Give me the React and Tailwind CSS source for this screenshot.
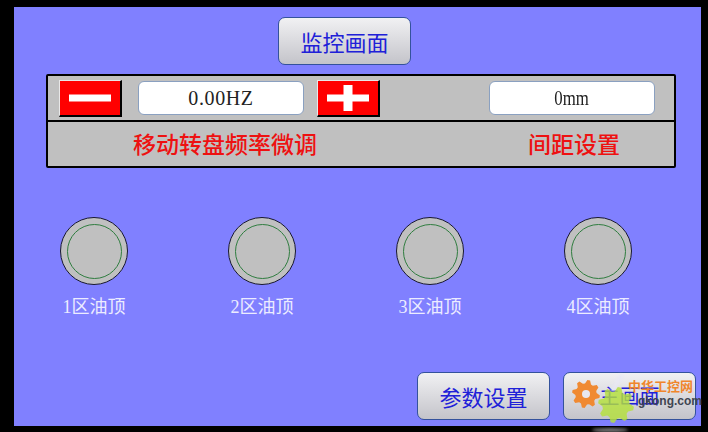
import React from "react";

const serif = "font-['Liberation_Serif','Noto_Sans_CJK_SC',serif]";

function Gear({ cx, cy, r, teeth, fill, hole, opacity = 1 }) {
  const pts = [];
  for (let i = 0; i < teeth * 4; i++) {
    const a = (i / (teeth * 4)) * Math.PI * 2;
    const rad = i % 4 < 2 ? r : r * 0.76;
    pts.push(`${(cx + rad * Math.cos(a + 0.1)).toFixed(1)},${(cy + rad * Math.sin(a + 0.1)).toFixed(1)}`);
  }
  return (
    <g opacity={opacity}>
      <polygon points={pts.join(" ")} fill={fill} />
      {hole > 0 && <circle cx={cx} cy={cy} r={hole} fill="#e8e8f0" />}
    </g>
  );
}

function ImgButton({ children, className = "", textClass = "text-[22px]" }) {
  return (
    <div
      className={`w-[133px] h-[48px] rounded-[7px] border border-[#34529c] bg-gradient-to-b from-[#f1f1f3] to-[#c4c4ca] flex items-center justify-center text-[#2020d8] font-['Noto_Sans_CJK_SC',sans-serif] font-normal ${textClass} ${className}`}
    >
      {children}
    </div>
  );
}

function RedButton({ plus }) {
  return (
    <div className="relative w-[63px] h-[37px] bg-[#ff0000] border-t border-l border-t-[#e8e8e8] border-l-[#e8e8e8] border-r-2 border-b-2 border-r-black border-b-black flex items-center justify-center">
      <svg width="44" height="28" viewBox="0 0 44 28">
        <rect x="1" y="10.5" width="42" height="7" fill="#fff" />
        {plus && <rect x="17.5" y="1" width="9" height="26" fill="#fff" />}
      </svg>
    </div>
  );
}

function ValueBox({ children, className = "" }) {
  return (
    <div
      className={`w-[166px] h-[34px] rounded-[6px] bg-white border border-[#8aa0c0] flex items-center justify-center text-[20px] text-[#222] ${serif} ${className}`}
    >
      {children}
    </div>
  );
}

function Lamp({ label }) {
  return (
    <div className="w-[168px] shrink-0 flex flex-col items-center">
      <div className="w-[68px] h-[68px] rounded-full bg-[#c0c0c0] border border-[#181830] flex items-center justify-center">
        <div className="w-[55px] h-[55px] rounded-full border border-[#2f7d3f]" />
      </div>
      <div className={`mt-[9px] text-[18px] leading-[26px] text-[#ececff] ${serif}`}>{label}</div>
    </div>
  );
}

export default function App() {
  return (
    <div className="relative w-[708px] h-[432px] bg-black pt-[7px] pl-[14px] overflow-hidden">
      <div className="w-[687px] h-[419px] bg-[#8080ff] pt-[10px]">
        <ImgButton className="ml-[264px]">监控画面</ImgButton>

        <div className="ml-[32px] mt-[9px] w-[630px] h-[94px] bg-[#c0c0c0] border-2 border-black rounded-[2px] flex flex-col">
          <div className="h-[46px] flex items-center pl-[11px] border-b-2 border-black shrink-0">
            <RedButton />
            <ValueBox className="ml-[16px] tracking-[0.6px]">0.00HZ</ValueBox>
            <div className="ml-[13px]">
              <RedButton plus />
            </div>
            <ValueBox className="ml-[109px]">
              <span className="inline-block scale-x-[0.84]">0mm</span>
            </ValueBox>
          </div>
          <div className="flex-1 flex items-center pb-[2px] font-['Noto_Sans_CJK_SC',sans-serif] text-[23px] font-medium text-[#ee1111] leading-none">
            <span className="ml-[85px]">移动转盘频率微调</span>
            <span className="ml-[211px]">间距设置</span>
          </div>
        </div>

        <div className="flex mt-[49px] ml-[-4px]">
          <Lamp label="1区油顶" />
          <Lamp label="2区油顶" />
          <Lamp label="3区油顶" />
          <Lamp label="4区油顶" />
        </div>

        <div className="flex justify-end gap-[13px] mt-[52px] mr-[5px]">
          <ImgButton>参数设置</ImgButton>
          <ImgButton textClass="text-[20px]">主画面</ImgButton>
        </div>
      </div>

      <svg className="absolute left-[560px] top-[370px]" width="148" height="62" viewBox="0 0 148 62">
        <defs>
          <filter id="blur">
            <feGaussianBlur stdDeviation="1.5" />
          </filter>
        </defs>
        <path d="M50 20 L60 4 L64 6 L54 22 Z" fill="#e8e8f4" opacity="0.8" filter="url(#blur)" />
        <ellipse cx="50" cy="60" rx="18" ry="2" fill="#777" filter="url(#blur)" />
        <Gear cx={26} cy={24} r={14} teeth={8} fill="#f08a32" hole={4} />
        <Gear cx={56} cy={35} r={18} teeth={8} fill="#b4e03c" hole={0} opacity={0.82} />
      </svg>
      <div className="absolute left-[628px] top-[379px] text-[13px] leading-[14px] font-bold text-[#f0862c] font-['Noto_Sans_CJK_SC',sans-serif]">
        中华工控网
      </div>
      <div className="absolute left-[638px] top-[395px] text-[12px] leading-[12px] font-bold text-[#3f4550] font-['Liberation_Sans',sans-serif]">
        gkong.com
      </div>
    </div>
  );
}
